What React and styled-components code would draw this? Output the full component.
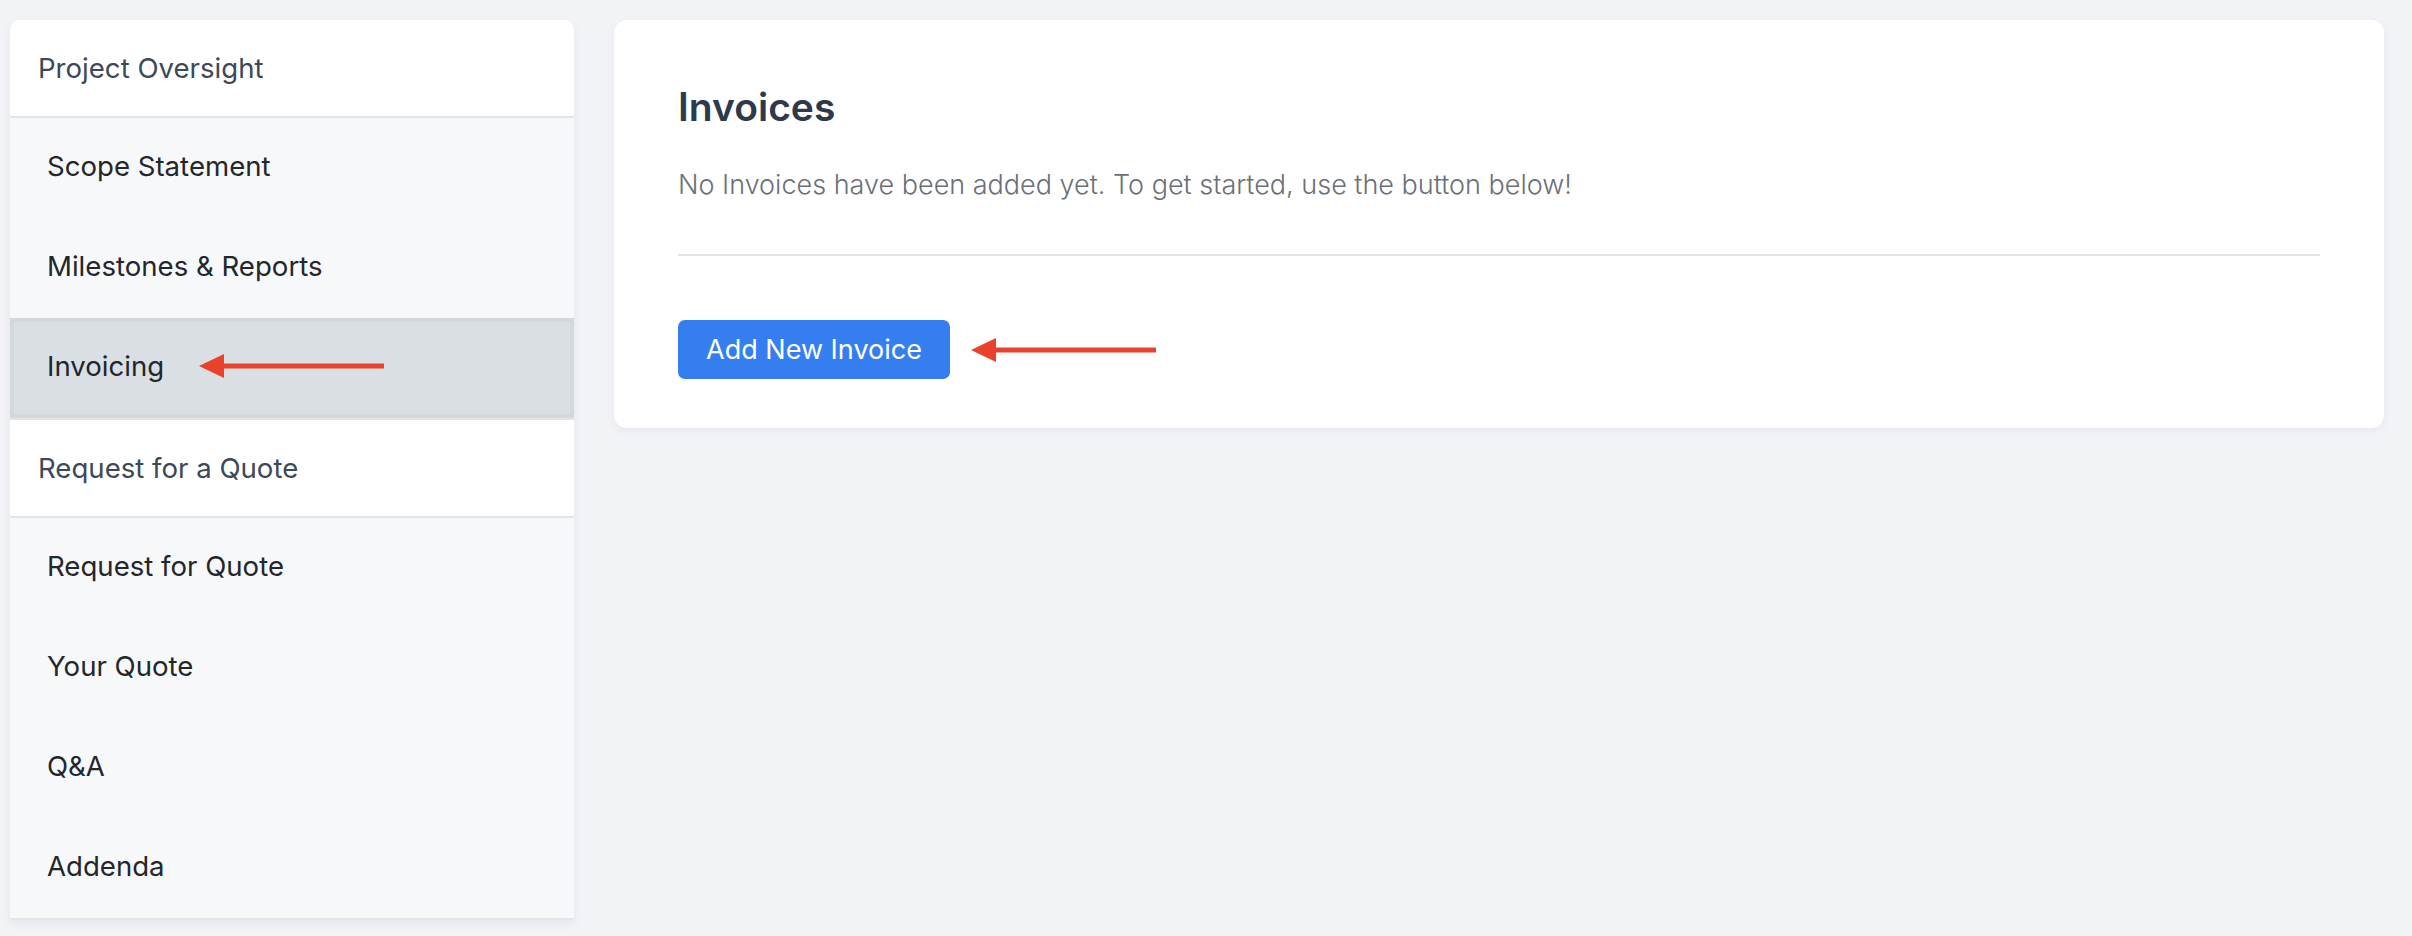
import React from "react";
import styled, { createGlobalStyle, css } from "styled-components";

const GlobalStyle = createGlobalStyle`
  * {
    box-sizing: border-box;
  }

  body {
    margin: 0;
    background-color: #f2f3f7;
    font-family: "Inter", "Open Sans", sans-serif;
  }
`;

const Page = styled.div`
  display: flex;
  align-items: flex-start;
  gap: 40px;
  padding: 20px 28px 16px 10px;
  min-height: 936px;
`;

const Sidebar = styled.nav`
  width: 564px;
  flex-shrink: 0;
  background-color: #ffffff;
  border-radius: 10px 10px 2px 2px;
  overflow: hidden;
  box-shadow: 0 4px 10px rgba(30, 40, 70, 0.06);
`;

const SectionHeader = styled.div`
  height: 96px;
  display: flex;
  align-items: center;
  padding-left: 28px;
  font-size: 27.6px;
  color: #3d4858;
  background-color: #ffffff;
`;

const ItemGroup = styled.div`
  background-color: #f7f8fa;
  border-top: 2px solid #e3e4e6;
  border-bottom: 2px solid #e3e4e6;
`;

const Item = styled.div`
  height: 100px;
  display: flex;
  align-items: center;
  gap: 35px;
  padding: 0 0 5px 37px;
  font-size: 27.6px;
  color: #23262b;

  ${({ active }) =>
    active &&
    css`
      background-color: #dadfe3;
      box-shadow: inset 0 0 0 4px #d2d8dc;
    `}
`;

const Main = styled.section`
  flex: 1;
  background-color: #ffffff;
  border-radius: 13px;
  padding: 64px 64px 49px;
  box-shadow: 0 3px 10px rgba(30, 40, 70, 0.05);
`;

const Title = styled.h2`
  margin: 0;
  font-size: 39px;
  line-height: 46px;
  font-weight: 600;
  color: #2e3a4b;
`;

const Message = styled.p`
  margin: 35px 0 0;
  font-size: 27px;
  line-height: 39px;
  font-weight: 300;
  color: #6b7078;
`;

const Divider = styled.hr`
  margin: 50px 0 0;
  border: none;
  border-top: 2px solid #e3e3e3;
`;

const Actions = styled.div`
  display: flex;
  align-items: center;
  gap: 21px;
  margin-top: 64px;
`;

const Button = styled.button`
  height: 59px;
  padding: 0 28px;
  border: none;
  border-radius: 7px;
  background-color: #347ef0;
  color: #ffffff;
  font-family: inherit;
  font-size: 27px;
  cursor: pointer;
`;

const ArrowSvg = styled.svg`
  flex-shrink: 0;
  display: block;
`;

function Arrow() {
  return (
    <ArrowSvg width="185" height="24" viewBox="0 0 185 24">
      <rect x="22" y="9.5" width="163" height="5" fill="#e9412b" />
      <polygon points="0,12 25,0 25,24" fill="#e9412b" />
    </ArrowSvg>
  );
}

const sections = [
  {
    title: "Project Oversight",
    items: ["Scope Statement", "Milestones & Reports", "Invoicing"],
  },
  {
    title: "Request for a Quote",
    items: ["Request for Quote", "Your Quote", "Q&A", "Addenda"],
  },
];

function App() {
  const current = "Invoicing";

  return (
    <>
      <GlobalStyle />
      <Page>
        <Sidebar>
          {sections.map((section) => (
            <div key={section.title}>
              <SectionHeader>{section.title}</SectionHeader>
              <ItemGroup>
                {section.items.map((item) => (
                  <Item key={item} active={item === current}>
                    <span>{item}</span>
                    {item === current && <Arrow />}
                  </Item>
                ))}
              </ItemGroup>
            </div>
          ))}
        </Sidebar>
        <Main>
          <Title>Invoices</Title>
          <Message>
            No Invoices have been added yet. To get started, use the button
            below!
          </Message>
          <Divider />
          <Actions>
            <Button>Add New Invoice</Button>
            <Arrow />
          </Actions>
        </Main>
      </Page>
    </>
  );
}

export default App;
